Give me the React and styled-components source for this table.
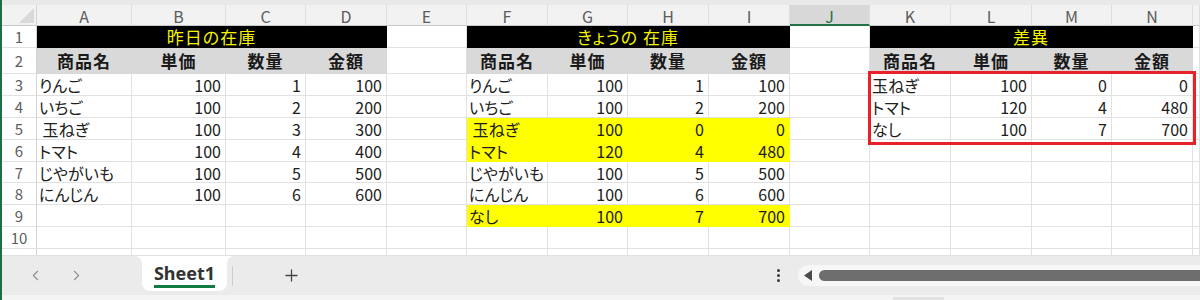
import React from 'react';
import styled, { createGlobalStyle } from 'styled-components';
import { ChevronLeft, ChevronRight, Plus } from 'lucide-react';

const GlobalStyle = createGlobalStyle`
  html, body {
    margin: 0;
    padding: 0;
    background: #fff;
  }
  body {
    font-family: "Noto Sans CJK JP", "Noto Sans", sans-serif;
    overflow: hidden;
  }
`;

const COLS = [35, 95, 94, 80, 81, 80, 81, 80, 81, 81, 80, 81, 81, 80, 81];
const LETTERS = ['A', 'B', 'C', 'D', 'E', 'F', 'G', 'H', 'I', 'J', 'K', 'L', 'M', 'N', ''];
const ROW_H = [22, 26, 22, 22, 22, 22, 21, 22, 22, 22, 7];
const ACTIVE_COL = 'J';
const YELLOW = '#ffff00';

const HEADS = ['商品名', '単価', '数量', '金額'];

const LEFT = [
  ['りんご', 100, 1, 100],
  ['いちご', 100, 2, 200],
  [' 玉ねぎ', 100, 3, 300],
  ['トマト', 100, 4, 400],
  ['じやがいも', 100, 5, 500],
  ['にんじん', 100, 6, 600],
];

const RIGHT = [
  ['りんご', 100, 1, 100],
  ['いちご', 100, 2, 200],
  [' 玉ねぎ', 100, 0, 0, true],
  ['トマト', 120, 4, 480, true],
  ['じやがいも', 100, 5, 500],
  ['にんじん', 100, 6, 600],
  ['なし', 100, 7, 700, true],
];

const DIFF = [
  ['玉ねぎ', 100, 0, 0],
  ['トマト', 120, 4, 480],
  ['なし', 100, 7, 700],
];

const Window = styled.div`
  width: 1200px;
  height: 300px;
  box-sizing: border-box;
  border-left: 2px solid #1d6f42;
  display: flex;
  flex-direction: column;
  overflow: hidden;
`;

const TopStrip = styled.div`
  flex: none;
  height: 5px;
  background: #e9e9e9;
`;

const SheetArea = styled.div`
  flex: none;
  position: relative;
`;

const Grid = styled.div`
  display: grid;
  grid-template-columns: ${COLS.map((w) => `${w}px`).join(' ')} 1fr;
  grid-template-rows: 21px ${ROW_H.map((h) => `${h}px`).join(' ')};
`;

const Corner = styled.div`
  box-sizing: border-box;
  background: #f2f2f2;
  border-right: 1px solid #d4d4d4;
  border-bottom: 1px solid #c8c8c8;
  display: flex;
  justify-content: flex-end;
  align-items: flex-end;
  padding: 0 2px 2px 0;
`;

const CornerMark = styled.div`
  width: 15px;
  height: 15px;
  background: #d9d9d9;
  clip-path: polygon(100% 0, 100% 100%, 0 100%);
`;

const ColHead = styled.div`
  box-sizing: border-box;
  display: flex;
  align-items: center;
  justify-content: center;
  font-size: 16px;
  line-height: 1;
  color: ${(p) => (p.$active ? '#217346' : '#5c5c5c')};
  background: ${(p) => (p.$active ? '#d8d8d8' : '#f2f2f2')};
  border-right: 1px solid #dedede;
  border-bottom: ${(p) => (p.$active ? '2px solid #217346' : '1px solid #c8c8c8')};
  padding-top: ${(p) => (p.$active ? '2px' : '1px')};
`;

const RowHead = styled.div`
  box-sizing: border-box;
  display: flex;
  align-items: center;
  justify-content: center;
  overflow: hidden;
  font-size: 15px;
  line-height: 1;
  color: #5c5c5c;
  background: #fff;
  border-right: 1px solid #d4d4d4;
  border-bottom: 1px solid #e1e1e1;
`;

const Cell = styled.div`
  box-sizing: border-box;
  display: flex;
  align-items: center;
  justify-content: ${(p) => (p.$num ? 'flex-end' : 'flex-start')};
  padding: ${(p) => (p.$num ? '1px 4px 0 0' : '1px 0 0 2px')};
  white-space: pre;
  font-size: 16px;
  line-height: 1;
  color: #202020;
  font-feature-settings: "palt";
  background: ${(p) => p.$fill || '#fff'};
  border-right: 1px solid ${(p) => p.$fill || '#e1e1e1'};
  border-bottom: 1px solid ${(p) => p.$fill || '#e1e1e1'};
`;

const TitleCell = styled(Cell)`
  grid-column: span 4;
  justify-content: center;
  padding: 0;
  background: #000;
  border-color: #000;
  color: #f5f500;
  font-size: 17px;
  letter-spacing: 1px;
`;

const HeadCell = styled(Cell)`
  justify-content: center;
  padding: 0;
  background: #d9d9d9;
  border-color: #d9d9d9;
  font-size: 17px;
  font-weight: 700;
  letter-spacing: 1px;
  color: #1a1a1a;
`;

const Highlight = styled.div`
  position: absolute;
  left: 866px;
  top: 66px;
  width: 328px;
  height: 74px;
  box-sizing: border-box;
  border: 3px solid #e8202a;
  pointer-events: none;
`;

const TabBar = styled.div`
  flex: none;
  height: 39px;
  display: flex;
  background: linear-gradient(to bottom, #fff 50%, #ebebeb 50%);
`;

const NavGroup = styled.div`
  width: 140px;
  display: flex;
  align-items: center;
  gap: 24px;
  padding-left: 25px;
  box-sizing: border-box;
  background: #ebebeb;
  border-top-right-radius: 8px;
  color: #8f8f8f;
`;

const SheetTab = styled.div`
  width: 85px;
  height: 35px;
  box-sizing: border-box;
  display: flex;
  justify-content: center;
  align-items: flex-start;
  padding-top: 6px;
  background: #fff;
  border-bottom-left-radius: 8px;
  border-bottom-right-radius: 8px;
`;

const TabLabel = styled.span`
  font-family: "Noto Sans", "Open Sans", sans-serif;
  font-size: 18px;
  font-weight: 700;
  line-height: 22px;
  color: #323232;
  padding-bottom: 1px;
  border-bottom: 3px solid #107c41;
`;

const TabRest = styled.div`
  flex: 1;
  display: flex;
  align-items: center;
  background: #ebebeb;
  border-top-left-radius: 8px;
  margin-right: -20px;
`;

const Divider = styled.div`
  width: 1px;
  height: 20px;
  margin-left: 5px;
  background: #cdcdcd;
`;

const AddButton = styled.div`
  display: flex;
  margin-left: 49px;
  color: #444;
`;

const MoreDots = styled.div`
  display: flex;
  flex-direction: column;
  gap: 2px;
  margin-left: 476px;
`;

const Dot = styled.span`
  width: 3px;
  height: 3px;
  border-radius: 50%;
  background: #3a3a3a;
`;

const ScrollTrack = styled.div`
  flex: 1;
  height: 21px;
  margin-left: 18px;
  display: flex;
  align-items: center;
  padding-left: 6px;
  background: #f7f7f7;
  border-radius: 11px;
`;

const ScrollArrow = styled.div`
  width: 8px;
  height: 11px;
  background: #4a4a4a;
  clip-path: polygon(0 50%, 100% 0, 100% 100%);
`;

const ScrollThumb = styled.div`
  flex: 1;
  height: 11px;
  margin-left: 7px;
  background: #6e6e6e;
  border-radius: 6px;
`;

const BottomStrip = styled.div`
  flex: 1;
  background: #f4f4f4;
  display: flex;
  align-items: flex-end;
`;

const StripNub = styled.div`
  width: 51px;
  height: 3px;
  margin-left: 891px;
  background: #e3e3e3;
`;

const block = (row, key, colSpan) => {
  if (!row) {
    return Array.from({ length: colSpan }, (_, i) => <Cell key={`${key}${i}`} />);
  }
  const fill = row[4] ? YELLOW : undefined;
  return row.slice(0, 4).map((v, i) => (
    <Cell key={`${key}${i}`} $num={i > 0} $fill={fill}>
      {v}
    </Cell>
  ));
};

const App = () => {
  const bodyRows = [];
  for (let r = 3; r <= 11; r++) {
    const i = r - 3;
    bodyRows.push(
      <RowHead key={`rh${r}`}>{r <= 10 ? r : ''}</RowHead>,
      ...block(LEFT[i], `a${r}`, 4),
      <Cell key={`e${r}`} />,
      ...block(RIGHT[i], `f${r}`, 4),
      <Cell key={`j${r}`} />,
      ...block(DIFF[i], `k${r}`, 4),
      <Cell key={`o${r}`} />
    );
  }

  return (
    <>
      <GlobalStyle />
      <Window>
        <TopStrip />
        <SheetArea>
          <Grid>
            <Corner>
              <CornerMark />
            </Corner>
            {LETTERS.map((l, i) => (
              <ColHead key={`c${i}`} $active={l === ACTIVE_COL}>
                {l}
              </ColHead>
            ))}

            <RowHead>1</RowHead>
            <TitleCell>昨日の在庫</TitleCell>
            <Cell />
            <TitleCell>きょうの 在庫</TitleCell>
            <Cell />
            <TitleCell>差異</TitleCell>
            <Cell />

            <RowHead>2</RowHead>
            {HEADS.map((h) => <HeadCell key={`l${h}`}>{h}</HeadCell>)}
            <Cell />
            {HEADS.map((h) => <HeadCell key={`r${h}`}>{h}</HeadCell>)}
            <Cell />
            {HEADS.map((h) => <HeadCell key={`d${h}`}>{h}</HeadCell>)}
            <Cell />

            {bodyRows}
          </Grid>
          <Highlight />
        </SheetArea>

        <TabBar>
          <NavGroup>
            <ChevronLeft size={17} strokeWidth={1.5} />
            <ChevronRight size={17} strokeWidth={1.5} />
          </NavGroup>
          <SheetTab>
            <TabLabel>Sheet1</TabLabel>
          </SheetTab>
          <TabRest>
            <Divider />
            <AddButton>
              <Plus size={19} strokeWidth={1.6} />
            </AddButton>
            <MoreDots>
              <Dot />
              <Dot />
              <Dot />
            </MoreDots>
            <ScrollTrack>
              <ScrollArrow />
              <ScrollThumb />
            </ScrollTrack>
          </TabRest>
        </TabBar>
        <BottomStrip>
          <StripNub />
        </BottomStrip>
      </Window>
    </>
  );
};

export default App;
